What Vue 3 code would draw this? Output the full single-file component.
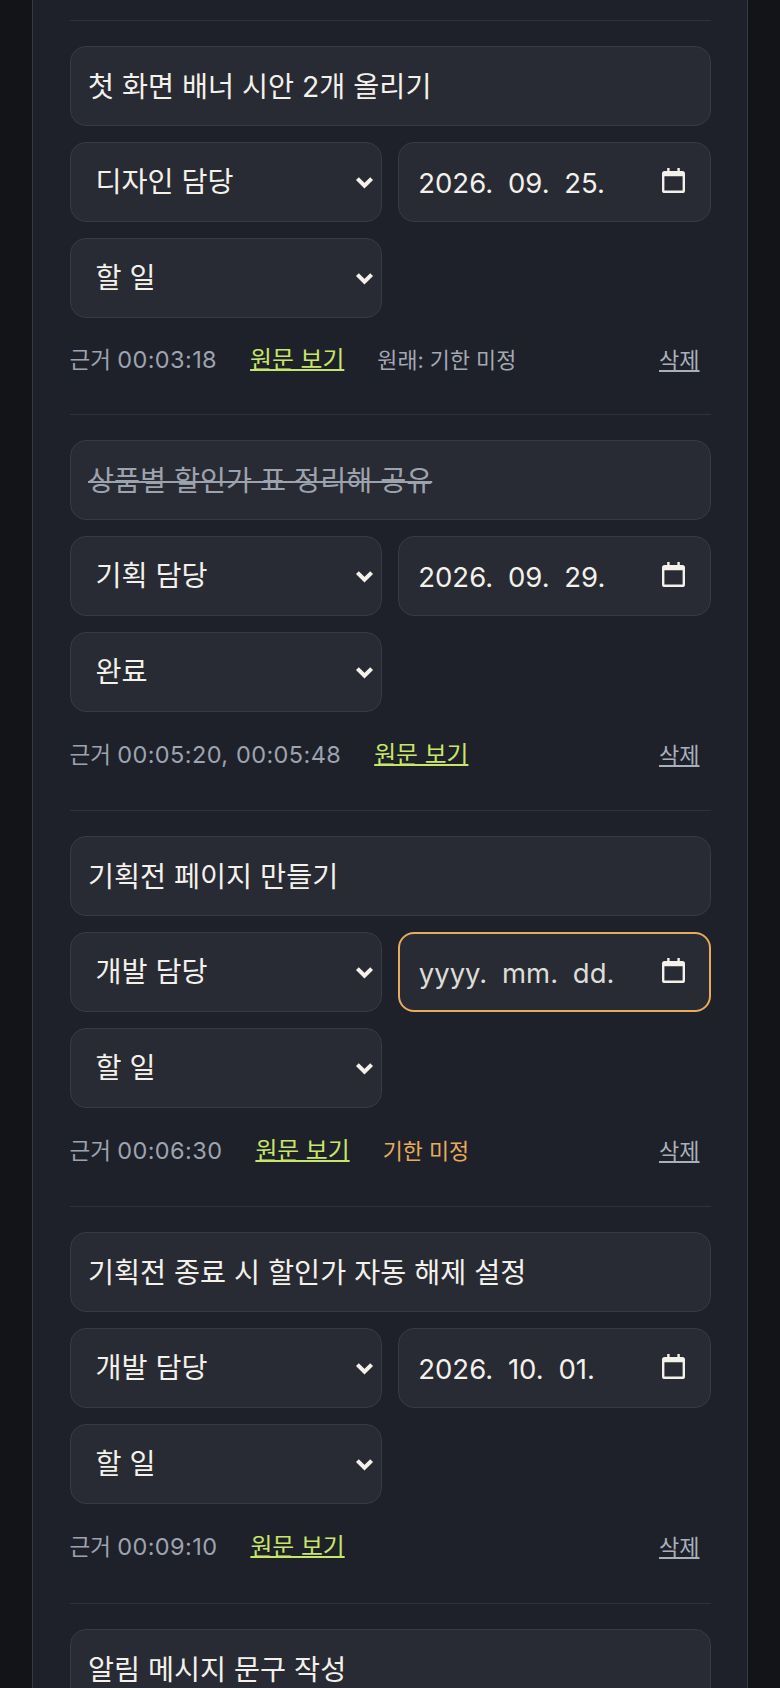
<script setup>
const items = [
  { title: '첫 화면 배너 시안 2개 올리기', owner: '디자인 담당', date: '2026. 09. 25.', status: '할 일', ev: '00:03:18', note: '원래: 기한 미정', noteKind: 'plain' },
  { title: '상품별 할인가 표 정리해 공유', owner: '기획 담당', date: '2026. 09. 29.', status: '완료', ev: '00:05:20, 00:05:48', done: true },
  { title: '기획전 페이지 만들기', owner: '개발 담당', date: 'yyyy. mm. dd.', status: '할 일', ev: '00:06:30', note: '기한 미정', noteKind: 'warn', warn: true },
  { title: '기획전 종료 시 할인가 자동 해제 설정', owner: '개발 담당', date: '2026. 10. 01.', status: '할 일', ev: '00:09:10' },
  { title: '알림 메시지 문구 작성' },
]
const owners = ['디자인 담당', '기획 담당', '개발 담당']
const statuses = ['할 일', '진행 중', '완료']
</script>

<template>
  <main class="page">
    <section class="panel">
      <article v-for="item in items" :key="item.title" class="item">
        <input class="field title" :class="{ done: item.done }" type="text" :value="item.title" />
        <template v-if="item.owner">
          <div class="grid">
            <div class="wrap">
              <select class="field sel">
                <option v-for="o in owners" :key="o" :selected="o === item.owner">{{ o }}</option>
              </select>
              <svg class="chev" viewBox="0 0 19 13" aria-hidden="true"><path d="M2.4 2.6 9.5 9.7 16.6 2.6" fill="none" stroke="currentColor" stroke-width="4" /></svg>
            </div>
            <div class="wrap">
              <input class="field date" :class="{ warn: item.warn }" type="text" readonly :value="item.date" />
              <svg class="cal" viewBox="0 0 23 25" aria-hidden="true"><path d="M5.2 0h2.4v3h7.8V0h2.4v3h2.6A2.6 2.6 0 0 1 23 5.6v16.8a2.6 2.6 0 0 1-2.6 2.6H2.6A2.6 2.6 0 0 1 0 22.4V5.6A2.6 2.6 0 0 1 2.6 3h2.6V0Zm-2.8 8.2v14.4h18.2V8.2H2.4Z" fill="currentColor" fill-rule="evenodd" /></svg>
            </div>
            <div class="wrap">
              <select class="field sel">
                <option v-for="s in statuses" :key="s" :selected="s === item.status">{{ s }}</option>
              </select>
              <svg class="chev" viewBox="0 0 19 13" aria-hidden="true"><path d="M2.4 2.6 9.5 9.7 16.6 2.6" fill="none" stroke="currentColor" stroke-width="4" /></svg>
            </div>
          </div>
          <div class="meta">
            <span class="ev">근거 <span class="times">{{ item.ev }}</span></span>
            <a class="src" href="#">원문 보기</a>
            <span v-if="item.note" class="note" :class="item.noteKind">{{ item.note }}</span>
            <button class="del" type="button">삭제</button>
          </div>
        </template>
      </article>
    </section>
  </main>
</template>

<style>
html, body { margin: 0; background: #131417; overflow: hidden; }
</style>

<style scoped>
.page {
  height: 1688px;
  overflow: hidden;
  box-sizing: border-box;
  padding: 0 32px;
  background: #131417;
  font-family: Inter, "Noto Sans CJK KR", sans-serif;
  color-scheme: dark;
}
.panel {
  min-height: 1688px;
  box-sizing: border-box;
  padding: 20px 36.5px 0;
  background: #1e212a;
  border-left: 1.5px solid #363a45;
  border-right: 1.5px solid #363a45;
}
.item {
  display: flex;
  flex-direction: column;
  gap: 16px;
  padding: 25px 0 40.2px;
  border-top: 1.5px solid #2e323c;
}
.item:first-child { padding-bottom: 39px; }
.item:first-child .meta { margin-top: 11px; }
.grid {
  display: grid;
  grid-template-columns: 1fr 1fr;
  gap: 16px 16.5px;
}
.wrap { position: relative; min-width: 0; }
.field {
  display: block;
  box-sizing: border-box;
  width: 100%;
  height: 80px;
  padding: 0 16px;
  background: #282b34;
  border: 1.5px solid #373b46;
  border-radius: 16px;
  color: #f3f1ea;
  font: 28.3px Inter, "Noto Sans CJK KR", sans-serif;
  outline: none;
}
.title { padding-left: 17.5px; padding-bottom: 3px; }
.title.done { color: #9da3ae; text-decoration: line-through; }
.sel { appearance: none; padding-left: 25px; }
.date { padding-left: 19px; padding-top: 2px; font-size: 27.5px; word-spacing: 7px; }
.date.warn { border: 2px solid #e6ac5c; padding-left: 18.5px; color: #dcdcd8; }
.chev {
  position: absolute;
  right: 8.2px;
  top: 33.7px;
  width: 19px;
  height: 13px;
  color: #f3f1ea;
  pointer-events: none;
}
.cal {
  position: absolute;
  right: 25.5px;
  top: 25.5px;
  width: 23px;
  height: 25px;
  color: #f3f1ea;
  pointer-events: none;
}
.meta {
  display: flex;
  align-items: center;
  gap: 33px;
  height: 30px;
  margin-top: 12px;
  font-size: 22.5px;
  line-height: 30px;
}
.ev { color: #9da3b0; }
.times { font-size: 23.5px; letter-spacing: 0.4px; word-spacing: 0.5px; }
.src {
  color: #c8e66a;
  font-size: 23.8px;
  text-decoration-thickness: 2px;
}
.note { font-size: 21.8px; }
.note.plain { color: #a3a8b2; }
.note.warn { color: #e6ac5c; }
.del {
  margin-left: auto;
  margin-right: 11px;
  padding: 0;
  background: none;
  border: 0;
  color: #aab0bb;
  font: inherit;
  font-size: 22px;
  text-decoration: underline;
}
</style>
